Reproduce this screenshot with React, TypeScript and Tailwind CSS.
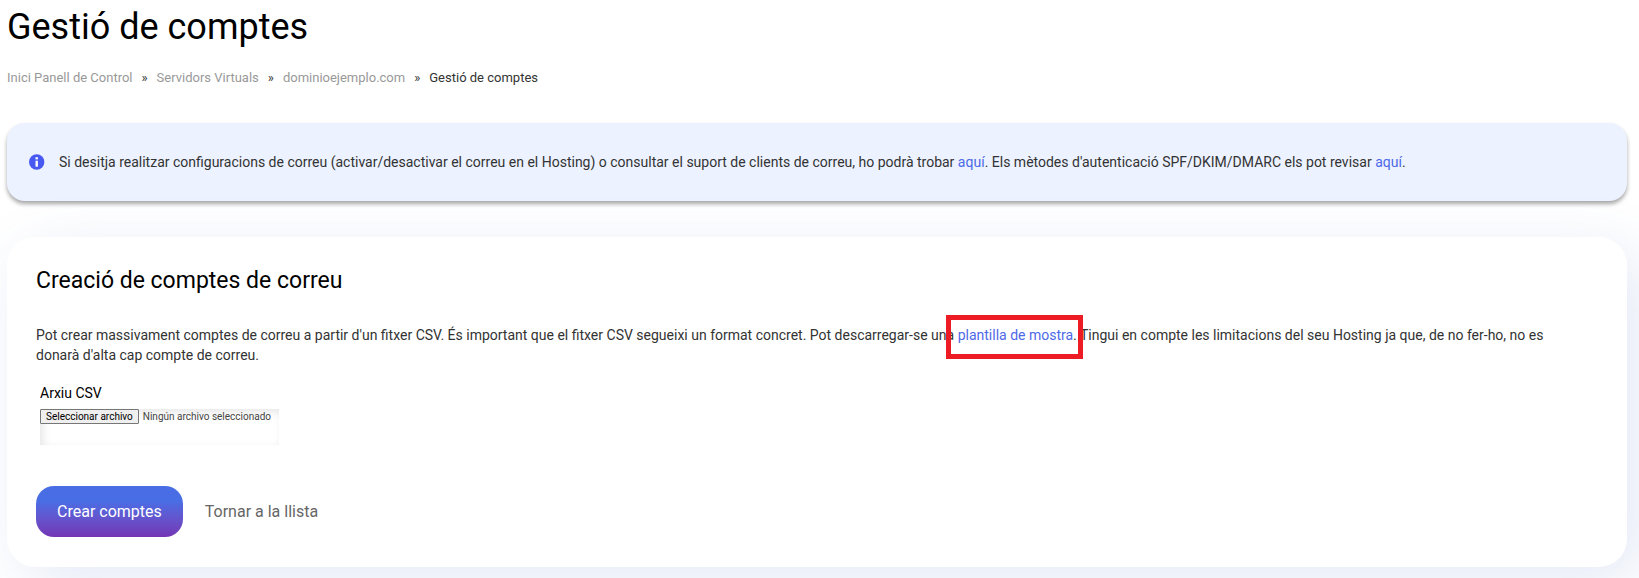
import { useRef, useState } from "react";

const crumbs = ["Inici Panell de Control", "Servidors Virtuals", "dominioejemplo.com"];

function Breadcrumbs() {
  return (
    <nav className="mt-[19px] flex items-center gap-[9px] text-[13px] leading-5 text-[#333333]">
      {crumbs.map((crumb) => (
        <span key={crumb} className="flex gap-[9px]">
          <a href="#" className="text-[#999999] hover:underline">
            {crumb}
          </a>
          <span>»</span>
        </span>
      ))}
      <span>Gestió de comptes</span>
    </nav>
  );
}

function InfoIcon() {
  return (
    <svg className="h-4 w-4 shrink-0" viewBox="0 0 16 16" aria-hidden="true">
      <circle cx="7.7" cy="8" r="7.7" fill="#4759f0" />
      <rect x="6.5" y="3.2" width="2.4" height="2.2" fill="#ffffff" />
      <rect x="6.5" y="6.7" width="2.4" height="6" fill="#ffffff" />
    </svg>
  );
}

function InfoBanner() {
  return (
    <div className="mt-[35px] flex items-center gap-3.5 rounded-[18px] bg-[#ecf2ff] px-[22px] py-7 text-sm leading-[22px] shadow-[0_3px_4px_rgba(0,0,0,0.35)]">
      <InfoIcon />
      <p>
        Si desitja realitzar configuracions de correu (activar/desactivar el correu en el Hosting) o
        consultar el suport de clients de correu, ho podrà trobar{" "}
        <a href="#" className="text-[#4d69e8]">aquí</a>. Els mètodes d'autenticació SPF/DKIM/DMARC els
        pot revisar <a href="#" className="text-[#4d69e8]">aquí</a>.
      </p>
    </div>
  );
}

function FileField() {
  const inputRef = useRef<HTMLInputElement>(null);
  const [fileName, setFileName] = useState("");

  return (
    <div className="mt-[18px] ml-1">
      <label htmlFor="csv" className="block text-sm leading-5 text-black">
        Arxiu CSV
      </label>
      <div className="mt-1.5 flex h-9 w-[239px] items-start gap-1 text-[10px] shadow-[inset_3px_3px_8px_rgba(0,0,0,0.1)]">
        <input
          ref={inputRef}
          id="csv"
          type="file"
          accept=".csv"
          className="hidden"
          onChange={(e) => setFileName(e.target.files?.[0]?.name ?? "")}
        />
        <button
          type="button"
          onClick={() => inputRef.current?.click()}
          className="h-[15px] rounded-[1px] border border-[#767676] bg-[#efefef] px-[5px] leading-[13px] text-black"
        >
          Seleccionar archivo
        </button>
        <span className="leading-[15px] text-[#444444]">{fileName || "Ningún archivo seleccionado"}</span>
      </div>
    </div>
  );
}

export default function App() {
  return (
    <main className="overflow-hidden bg-white pt-[5px] pr-3 pb-[11px] pl-[7px] font-[Roboto,sans-serif] text-[#333333]">
      <h1 className="text-4xl leading-[44px] text-black">Gestió de comptes</h1>
      <Breadcrumbs />
      <InfoBanner />

      <section className="mt-9 rounded-[28px] bg-white pt-7 pr-12 pb-[30px] pl-[29px] shadow-[15px_15px_60px_rgba(75,108,195,0.15)]">
        <h2 className="text-[23px] leading-8 text-black">Creació de comptes de correu</h2>
        <p className="mt-7 text-sm leading-5">
          Pot crear massivament comptes de correu a partir d'un fitxer CSV. És important que el fitxer
          CSV segueixi un format concret. Pot descarregar-se una{" "}
          <span className="relative whitespace-nowrap">
            <a href="#" className="text-[#4d69e8]">plantilla de mostra</a>.
            <span className="pointer-events-none absolute -top-3 -right-1.5 -bottom-4 -left-3 border-5 border-[#ed1c24]" />
          </span>{" "}
          Tingui en compte les limitacions del seu Hosting ja que, de no fer-ho, no es donarà d'alta cap
          compte de correu.
        </p>
        <FileField />
        <div className="mt-[41px] flex items-center gap-[22px] text-base">
          <button
            type="submit"
            className="h-[51px] rounded-[18px] bg-linear-to-b from-[#486de4] from-30% to-[#7335b5] px-[21px] text-white"
          >
            Crear comptes
          </button>
          <a href="#" className="text-[#666666]">
            Tornar a la llista
          </a>
        </div>
      </section>
    </main>
  );
}
